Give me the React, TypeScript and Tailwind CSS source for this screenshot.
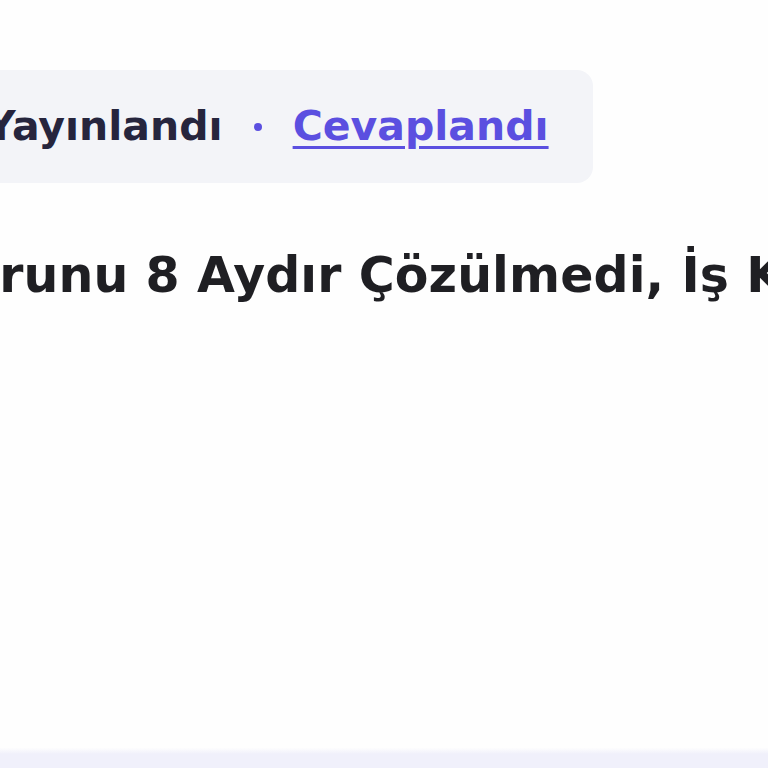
import React from "react";

export default function App() {
  return (
    <div
      className="w-[768px] h-[768px] bg-[#fefefe] overflow-hidden flex flex-col"
      style={{ fontFamily: '"DejaVu Sans", Inter, sans-serif' }}
    >
      {/* status pill */}
      <div className="mt-[70px] ml-[-40px] w-[633px] h-[113px] rounded-[16px] bg-[#f3f4f8] flex items-center pl-[26px] shrink-0">
        <span className="text-[41px] font-bold text-[#26253d]">Yayınlandı</span>
        <span className="ml-[31px] mr-[31px] w-[8px] h-[8px] rounded-full bg-[#5b4fe0]" />
        <a
          href="#"
          className="text-[41px] font-bold text-[#5b4fe0] underline decoration-[3px] underline-offset-[6px]"
        >
          Cevaplandı
        </a>
      </div>

      {/* headline */}
      <h1 className="mt-[68px] ml-[-70px] whitespace-nowrap text-[49px] font-bold text-[#1f1f23] leading-none tracking-[0.1px]">
        Sorunu 8 Aydır Çözülmedi, İş Kazası
      </h1>

      <div className="flex-1" />
      <div className="h-[6px] bg-gradient-to-b from-[#fdfdfe] to-[#f0f0fb] shrink-0" />
      <div className="h-[14px] bg-[#f0f0fb] shrink-0" />
    </div>
  );
}
